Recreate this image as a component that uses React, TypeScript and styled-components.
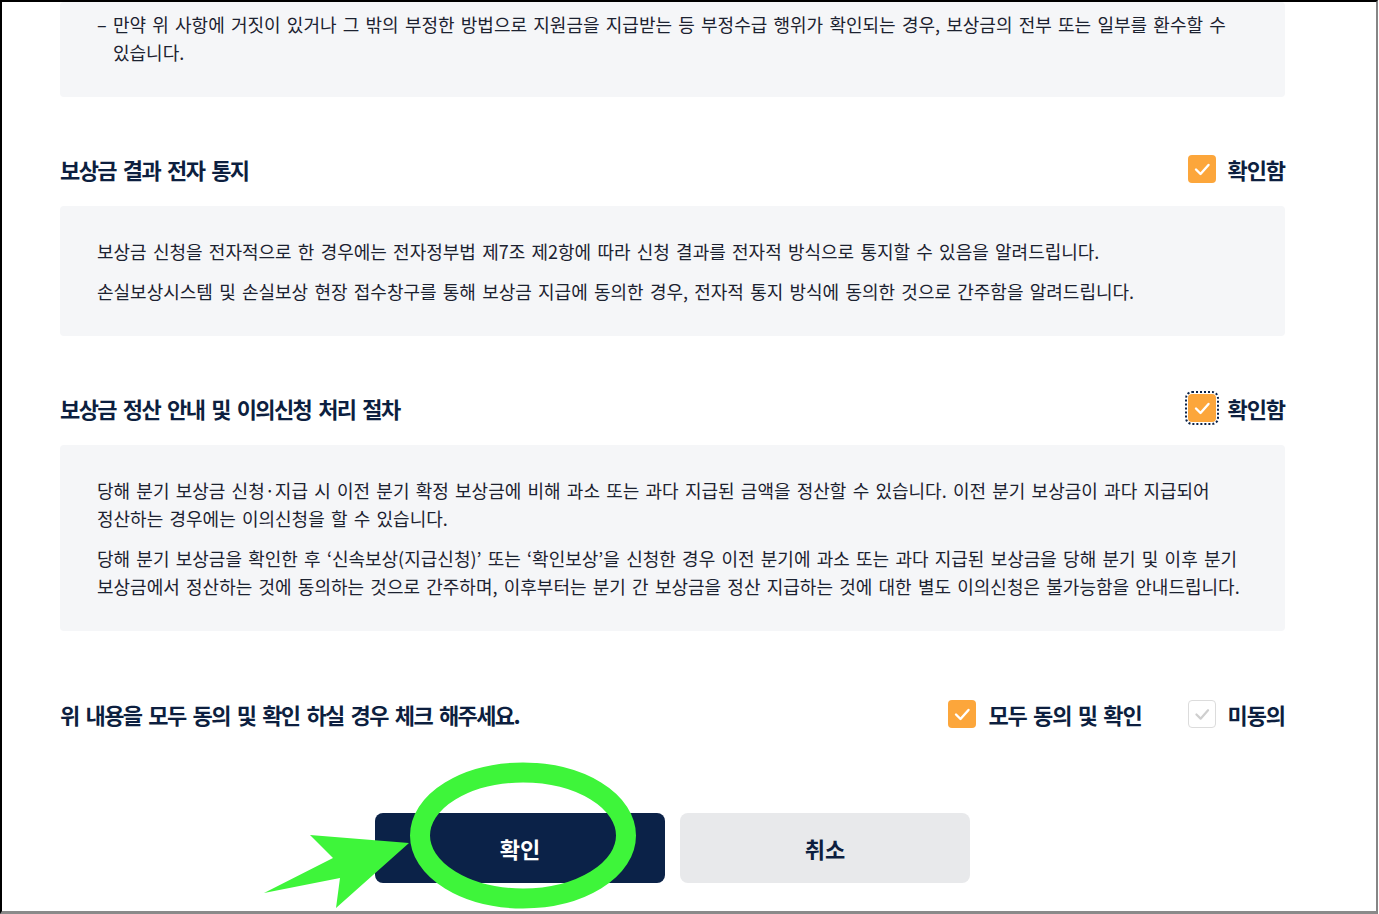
import React from 'react';
import styled, { createGlobalStyle } from 'styled-components';

const COLORS = {
  navy: '#0b2248',
  heading: '#0d1f3f',
  text: '#1c2230',
  box: '#f5f6f8',
  orange: '#fca63b',
  green: '#3ef53a',
};

const GlobalStyle = createGlobalStyle`
  html, body {
    margin: 0;
    padding: 0;
    background: #fff;
    overflow: hidden;
  }
  body {
    font-family: "Noto Sans CJK KR", "Noto Sans", sans-serif;
  }
`;

const Frame = styled.div`
  position: relative;
  box-sizing: border-box;
  width: 1378px;
  height: 914px;
  border-top: 2px solid #000;
  border-left: 2px solid #000;
  border-right: 2px solid #858585;
  border-bottom: 3px solid #8a8a8a;
  overflow: hidden;
`;

const Content = styled.div`
  width: 1225px;
  padding-left: 58px;
  display: flex;
  flex-direction: column;
`;

const InfoBox = styled.div<{ $top?: number }>`
  background: ${COLORS.box};
  border-radius: 4px;
  padding: ${(p) => p.$top ?? 31}px 16px 31px 37px;
  display: flex;
  flex-direction: column;
  gap: 12px;
`;

const Para = styled.p<{ $hanging?: boolean }>`
  margin: 0;
  color: ${COLORS.text};
  font-size: 18px;
  line-height: 28px;
  letter-spacing: 0;
  word-spacing: 2.2px;
  word-break: keep-all;
  padding-left: ${(p) => (p.$hanging ? '16px' : '0')};
  text-indent: ${(p) => (p.$hanging ? '-16px' : '0')};
`;

const SectionRow = styled.div<{ $mt: number; $mb?: number }>`
  display: flex;
  align-items: center;
  justify-content: space-between;
  height: 30px;
  margin-top: ${(p) => p.$mt}px;
  margin-bottom: ${(p) => p.$mb ?? 0}px;
`;

const Heading = styled.h3`
  margin: 0;
  color: ${COLORS.heading};
  font-size: 22px;
  font-weight: 700;
  line-height: 30px;
  letter-spacing: -1.6px;
  word-spacing: 3.5px;
`;

const Options = styled.div`
  display: flex;
  align-items: center;
  gap: 46px;
`;

const Option = styled.label`
  display: flex;
  align-items: center;
  gap: 12px;
  color: ${COLORS.heading};
  font-size: 22px;
  font-weight: 700;
  line-height: 30px;
  letter-spacing: -1.1px;
  word-spacing: 2.5px;
  cursor: pointer;
`;

const Box = styled.span<{ $checked: boolean; $focus?: boolean }>`
  display: inline-flex;
  align-items: center;
  justify-content: center;
  box-sizing: border-box;
  width: 28px;
  height: 28px;
  border-radius: 4px;
  background: ${(p) => (p.$checked ? COLORS.orange : '#fff')};
  border: ${(p) => (p.$checked ? 'none' : '1.5px solid #dcdcdc')};
  outline: ${(p) => (p.$focus ? `2px dotted ${COLORS.navy}` : 'none')};
  outline-offset: 1px;
`;

const Buttons = styled.div`
  display: flex;
  justify-content: center;
  gap: 15px;
  margin-top: 84px;
`;

const Button = styled.button<{ $primary?: boolean }>`
  width: 290px;
  height: 70px;
  border: none;
  border-radius: 8px;
  background: ${(p) => (p.$primary ? COLORS.navy : '#e8e9eb')};
  color: ${(p) => (p.$primary ? '#fff' : COLORS.heading)};
  font-family: inherit;
  font-size: 22px;
  font-weight: 700;
  cursor: pointer;
`;

const Overlay = styled.svg`
  position: absolute;
  top: -2px;
  left: -2px;
  width: 1379px;
  height: 914px;
  pointer-events: none;
`;

type CheckProps = {
  checked: boolean;
  focus?: boolean;
  label: string;
};

const Check: React.FC<CheckProps> = ({ checked, focus, label }: CheckProps) => (
  <Option>
    <Box $checked={checked} $focus={focus}>
      <svg width="28" height="28" viewBox="0 0 28 28">
        <polyline
          points="8,14.5 12.5,19 20.5,10"
          fill="none"
          stroke={checked ? '#fff' : '#cfcfcf'}
          strokeWidth="2.4"
          strokeLinecap="round"
          strokeLinejoin="round"
        />
      </svg>
    </Box>
    {label}
  </Option>
);

const App: React.FC = () => {
  return (
    <Frame>
      <GlobalStyle />
      <Content>
        <InfoBox $top={8}>
          <Para $hanging>
            – 만약 위 사항에 거짓이 있거나 그 밖의 부정한 방법으로 지원금을 지급받는 등 부정수급 행위가 확인되는 경우, 보상금의 전부 또는 일부를 환수할 수 있습니다.
          </Para>
        </InfoBox>

        <SectionRow $mt={57} $mb={22}>
          <Heading>보상금 결과 전자 통지</Heading>
          <Check checked label="확인함" />
        </SectionRow>
        <InfoBox>
          <Para>
            보상금 신청을 전자적으로 한 경우에는 전자정부법 제7조 제2항에 따라 신청 결과를 전자적 방식으로 통지할 수 있음을 알려드립니다.
          </Para>
          <Para>
            손실보상시스템 및 손실보상 현장 접수창구를 통해 보상금 지급에 동의한 경우, 전자적 통지 방식에 동의한 것으로 간주함을 알려드립니다.
          </Para>
        </InfoBox>

        <SectionRow $mt={57} $mb={22}>
          <Heading>보상금 정산 안내 및 이의신청 처리 절차</Heading>
          <Check checked focus label="확인함" />
        </SectionRow>
        <InfoBox>
          <Para>
            당해 분기 보상금 신청·지급 시 이전 분기 확정 보상금에 비해 과소 또는 과다 지급된 금액을 정산할 수 있습니다. 이전 분기 보상금이 과다 지급되어 정산하는 경우에는 이의신청을 할 수 있습니다.
          </Para>
          <Para>
            당해 분기 보상금을 확인한 후 ‘신속보상(지급신청)’ 또는 ‘확인보상’을 신청한 경우 이전 분기에 과소 또는 과다 지급된 보상금을 당해 분기 및 이후 분기 보상금에서 정산하는 것에 동의하는 것으로 간주하며, 이후부터는 분기 간 보상금을 정산 지급하는 것에 대한 별도 이의신청은 불가능함을 안내드립니다.
          </Para>
        </InfoBox>

        <SectionRow $mt={68}>
          <Heading>위 내용을 모두 동의 및 확인 하실 경우 체크 해주세요.</Heading>
          <Options>
            <Check checked label="모두 동의 및 확인" />
            <Check checked={false} label="미동의" />
          </Options>
        </SectionRow>

        <Buttons>
          <Button $primary>확인</Button>
          <Button>취소</Button>
        </Buttons>
      </Content>

      <Overlay viewBox="0 0 1379 914">
        <ellipse
          cx="523"
          cy="835.5"
          rx="103"
          ry="63"
          fill="none"
          stroke={COLORS.green}
          strokeWidth="20"
        />
        <polygon
          points="310,835 409,843 336,908 340,878 264,893 333,858"
          fill={COLORS.green}
        />
      </Overlay>
    </Frame>
  );
};

export default App;
